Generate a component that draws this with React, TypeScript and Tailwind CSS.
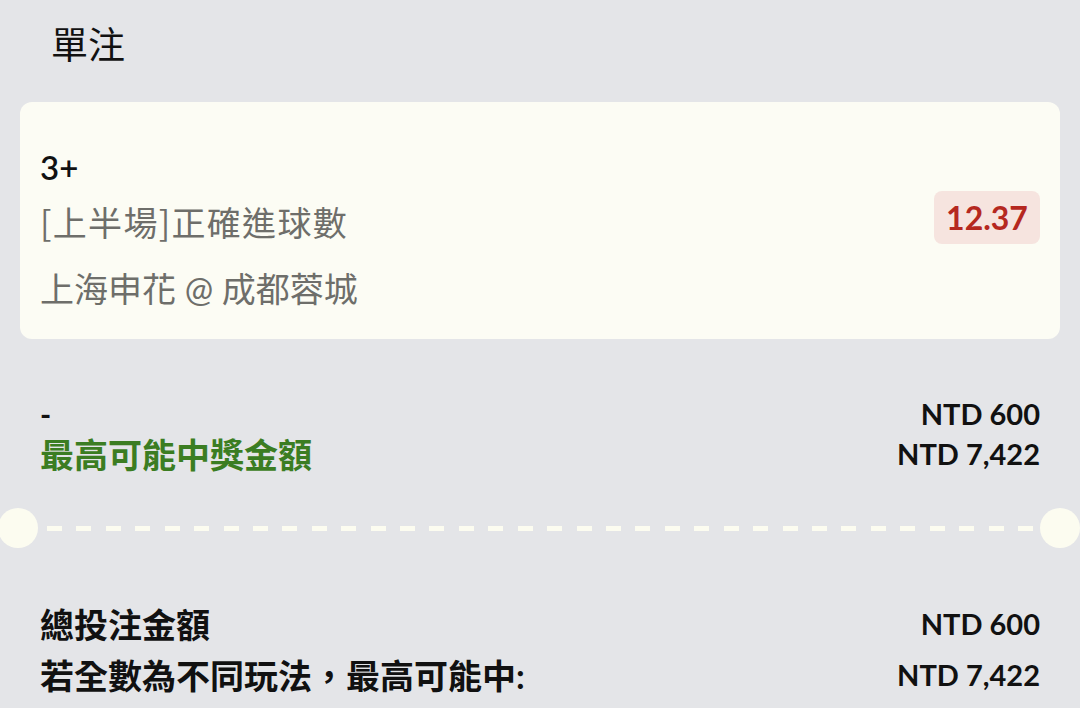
const font = "font-['Lato','Noto_Sans_CJK_TC',sans-serif]";

const dashes = Array.from({ length: 34 }, (_, i) => i);

export default function App() {
  return (
    <div className={`${font} w-[1080px] h-[708px] overflow-hidden bg-[#e4e5e8] text-[#111]`}>
      <div className="pt-[18px] pl-[51px]">
        <h2 className="text-[37px] leading-[54px] font-normal">單注</h2>
      </div>

      <div className="px-5 mt-[30px]">
        <div className="rounded-xl bg-[#fcfcf4] pl-5 pr-5 pt-[45px] pb-[25px] flex items-center justify-between">
          <div className="flex flex-col">
            <div className="text-[33px] leading-[40px] font-semibold">3+</div>
            <div className="mt-[10px] text-[34px] leading-[50px] tracking-[1.3px] text-[#6e6e6a] font-['Noto_Sans_CJK_TC',sans-serif]">[上半場]正確進球數</div>
            <div className="mt-[17px] text-[34px] leading-[50px] text-[#6e6e6a]">上海申花 @ 成都蓉城</div>
          </div>
          <div className="mt-[-26px] rounded-lg bg-[#f6e4df] h-[53px] w-[106px] flex items-center justify-center text-[32px] font-bold text-[#b5281f]">
            12.37
          </div>
        </div>
      </div>

      <div className="px-10 mt-[55px]">
        <div className="flex justify-between items-center h-[40px]">
          <span className="text-[30px] font-bold">-</span>
          <span className="text-[29px] font-bold">NTD 600</span>
        </div>
        <div className="flex justify-between items-center h-[40px]">
          <span className="text-[34px] font-bold text-[#3b7d22]">最高可能中獎金額</span>
          <span className="text-[29px] font-bold">NTD 7,422</span>
        </div>
      </div>

      <div className="mt-[34px] h-10 flex items-center">
        <div className="w-10 h-10 rounded-full bg-[#fcfcf0] -ml-[2px] shrink-0" />
        <div className="flex-1 flex justify-between ml-[9px] mr-[7px]">
          {dashes.map((i) => (
            <div key={i} className="w-[15px] h-[5px] bg-[#fcfcf0]" />
          ))}
        </div>
        <div className="w-10 h-10 rounded-full bg-[#fcfcf0] shrink-0" />
      </div>

      <div className="px-10 mt-[51px]">
        <div className="flex justify-between items-center h-[50px]">
          <span className="text-[34px] font-bold">總投注金額</span>
          <span className="text-[29px] font-bold">NTD 600</span>
        </div>
        <div className="flex justify-between items-center h-[50px] mt-[1px]">
          <span className="text-[34px] font-bold">若全數為不同玩法，最高可能中:</span>
          <span className="text-[29px] font-bold">NTD 7,422</span>
        </div>
      </div>
    </div>
  );
}
